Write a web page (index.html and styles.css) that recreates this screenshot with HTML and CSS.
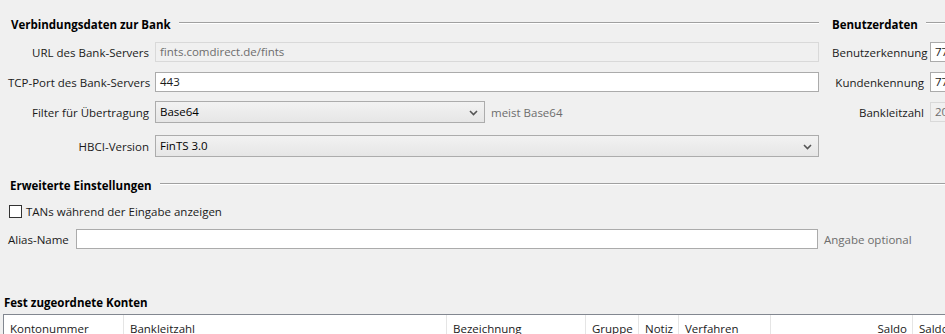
FILE: index.html
```html
<!DOCTYPE html>
<html lang="de">
<head>
<meta charset="utf-8">
<title>Bankzugang</title>
<link rel="stylesheet" href="styles.css">
</head>
<body>
<div class="page">
  <div class="top">
    <section class="conn">
      <h2 class="legend"><span>Verbindungsdaten zur Bank</span></h2>
      <div class="row r1">
        <label class="lbl">URL des Bank-Servers</label>
        <div class="input disabled wide">fints.comdirect.de/fints</div>
      </div>
      <div class="row r2">
        <label class="lbl">TCP-Port des Bank-Servers</label>
        <div class="input wide">443</div>
      </div>
      <div class="row r3">
        <label class="lbl">Filter für Übertragung</label>
        <div class="select short">Base64<svg class="chev" width="9" height="6" viewBox="0 0 9 6"><polyline points="1,1 4.5,4.5 8,1" fill="none" stroke="#555" stroke-width="1.6"/></svg></div>
        <span class="hint">meist Base64</span>
      </div>
      <div class="row r4">
        <label class="lbl">HBCI-Version</label>
        <div class="select wide">FinTS 3.0<svg class="chev" width="9" height="6" viewBox="0 0 9 6"><polyline points="1,1 4.5,4.5 8,1" fill="none" stroke="#555" stroke-width="1.6"/></svg></div>
      </div>
    </section>
    <section class="user">
      <h2 class="legend"><span>Benutzerdaten</span></h2>
      <div class="row r1">
        <label class="ulbl">Benutzerkennung</label>
        <div class="input uin">7712345678</div>
      </div>
      <div class="row r2">
        <label class="ulbl">Kundenkennung</label>
        <div class="input uin">7712345678</div>
      </div>
      <div class="row r3u">
        <label class="ulbl">Bankleitzahl</label>
        <div class="input disabled uin">20041111</div>
      </div>
    </section>
  </div>

  <section class="adv">
    <h2 class="legend"><span>Erweiterte Einstellungen</span></h2>
    <div class="check-row">
      <span class="checkbox"></span>
      <span>TANs während der Eingabe anzeigen</span>
    </div>
    <div class="alias-row">
      <label class="alias-lbl">Alias-Name</label>
      <div class="input alias"></div>
      <span class="hint">Angabe optional</span>
    </div>
  </section>

  <section class="accounts">
    <h2 class="acc-title">Fest zugeordnete Konten</h2>
    <div class="table">
      <div class="th">Kontonummer</div>
      <div class="th">Bankleitzahl</div>
      <div class="th">Bezeichnung</div>
      <div class="th">Gruppe</div>
      <div class="th">Notiz</div>
      <div class="th">Verfahren</div>
      <div class="th right">Saldo</div>
      <div class="th">Saldo</div>
    </div>
  </section>
</div>
</body>
</html>
```

FILE: styles.css
```css
* { box-sizing: border-box; }
html, body {
  margin: 0;
  padding: 0;
  background: #f0f0f0;
  overflow: hidden;
}
body {
  font-family: "Open Sans", "Noto Sans", sans-serif;
  font-size: 11.5px;
  color: #1a1a1a;
  width: 945px;
  height: 334px;
}
.page {
  width: 1150px;
  padding-top: 17px;
}
.top {
  display: flex;
  gap: 13px;
}
.conn {
  width: 811px;
  flex: none;
  margin-left: 8px;
}
.user {
  width: 300px;
  flex: none;
}
.legend {
  display: flex;
  align-items: center;
  gap: 8px;
  margin: 0;
  height: 16px;
  font-size: 11.5px;
  font-weight: bold;
  line-height: 16px;
  color: #000;
}
.legend::after {
  content: "";
  flex: 1;
  height: 0;
  border-top: 1px solid #a0a0a0;
  border-bottom: 1px solid #ffffff;
  margin-top: -4px;
}
.conn .legend { padding-left: 3px; }
.row {
  display: flex;
  align-items: center;
}
.r1 { margin-top: 9px; }
.r2 { margin-top: 10px; }
.r3 { margin-top: 9px; }
.r3u { margin-top: 10px; }
.r4 { margin-top: 12px; }
.lbl {
  width: 147px;
  flex: none;
  text-align: right;
  padding-right: 6px;
  white-space: nowrap;
}
.input {
  flex: none;
  height: 20px;
  line-height: 18px;
  background: #fff;
  border: 1px solid #ababab;
  padding: 0 4px;
  white-space: nowrap;
  overflow: hidden;
}
.input.disabled {
  background: #f0f0f0;
  border-color: #d9d9d9;
  color: #6d6d6d;
}
.wide { width: 664px; }
.select {
  position: relative;
  flex: none;
  height: 22px;
  line-height: 20px;
  border: 1px solid #acacac;
  background: linear-gradient(#f2f2f2, #e6e6e6);
  padding: 0 4px;
  color: #000;
}
.select.short { width: 330px; }
.chev {
  position: absolute;
  right: 6px;
  top: 8px;
}
.hint {
  color: #6d6d6d;
  margin-left: 6px;
  white-space: nowrap;
}
.ulbl {
  width: 98px;
  flex: none;
  text-align: right;
  padding-right: 6px;
  white-space: nowrap;
}
.uin { width: 150px; }

.adv {
  margin-top: 21px;
}
.adv .legend {
  padding-left: 10px;
}
.check-row {
  display: flex;
  align-items: center;
  gap: 4px;
  margin-top: 9px;
  margin-left: 9px;
  height: 16px;
}
.checkbox {
  width: 13px;
  height: 13px;
  background: #fff;
  border: 1px solid #333;
}
.alias-row {
  display: flex;
  align-items: center;
  margin-top: 10px;
  margin-left: 8px;
}
.alias-lbl {
  width: 68px;
  flex: none;
  white-space: nowrap;
}
.input.alias { width: 742px; }

.accounts {
  margin-top: 46px;
}
.acc-title {
  margin: 0 0 0 4px;
  font-size: 11.5px;
  font-weight: bold;
  line-height: 16px;
  height: 16px;
  color: #000;
}
.table {
  margin-top: 3px;
  margin-left: 3px;
  display: grid;
  grid-template-columns: 120px 323px 139px 53px 40px 92px 142px 80px;
  background: #fff;
  border-top: 1px solid #828790;
  border-left: 1px solid #828790;
  width: 1000px;
  height: 28px;
}
.th {
  padding: 0 0 0 6px;
  line-height: 27px;
  height: 27px;
  border-right: 1px solid #e5e5e5;
  white-space: nowrap;
  overflow: hidden;
}
.th.right {
  text-align: right;
  padding-right: 5px;
}
```
